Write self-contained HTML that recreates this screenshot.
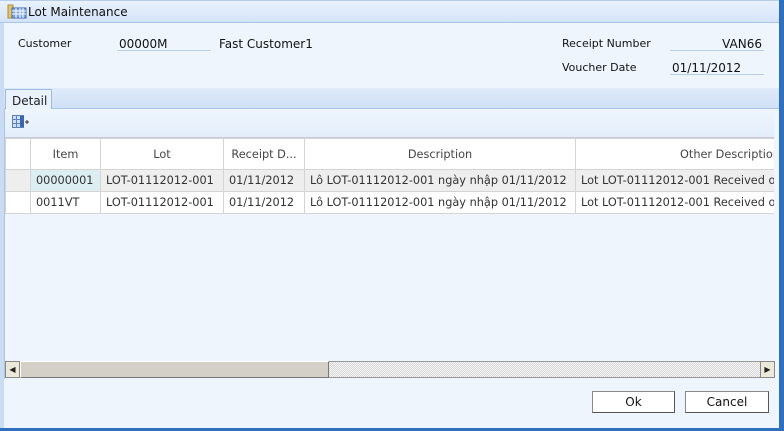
<!DOCTYPE html>
<html><head><meta charset="utf-8"><style>
*{margin:0;padding:0;box-sizing:border-box}
body{width:784px;height:431px;overflow:hidden;background:#eef5fd;font-family:Tahoma,"DejaVu Sans","Liberation Sans",sans-serif;font-size:11px;color:#222;position:relative}
.abs{position:absolute}
.title{left:0;top:0;width:779px;height:23px;background:linear-gradient(#e9f2fd,#d3e4f8);border-bottom:1px solid #a9c6ea;border-top:1px solid #b5cde9}
.title span{position:absolute;left:28px;top:4px;font-size:12px;color:#111}
.lbl{font-size:11px;color:#111}
.line{height:1px;background:#b9cde4}
.tabstrip{left:4px;top:88px;width:775px;height:21px;background:linear-gradient(#dfeafa,#d0e1f6);border-bottom:1px solid #a9c6ea}
.tab{left:5px;top:89px;width:47px;height:20px;background:#eaf3fd;border:1px solid #9cbbe0;border-bottom:none;padding:4px 0 0 6px;font-size:12px}
.tool{left:5px;top:110px;width:769px;height:28px;background:linear-gradient(#eef5fd,#e3eefb);border-bottom:1px solid #c8c8d8}
table{border-collapse:collapse;position:absolute;left:0;top:0;table-layout:fixed;width:820px}
td{border:1px solid #d4d4d4;height:22px;white-space:nowrap;overflow:hidden;padding:0 5px;font-size:11.3px;color:#333}
tr.h td{height:31px;text-align:center;background:#fff;color:#444}
tr.r1 td{background:#eeeeee}
tr.r2 td{background:#fff}
.clip{left:5px;top:138px;width:769px;height:223px;overflow:hidden}
.btn{height:22px;background:#fff;border:1px solid #888;border-right-color:#555;border-bottom-color:#555;text-align:center;font-size:12px;padding-top:3px;color:#111}
</style></head><body>
<div class="abs" style="left:0;top:0;width:4px;height:431px;background:#c9dcf3"></div>
<div class="abs" style="left:779px;top:0;width:5px;height:431px;background:#2f6fc0"></div>
<div class="abs" style="left:0;top:428px;width:784px;height:3px;background:#2f6fc0"></div>
<div class="abs title"><span>Lot Maintenance</span></div>
<svg class="abs" style="left:7px;top:4px" width="20" height="16"><rect x="1" y="1" width="5" height="13" fill="#e5c46a" stroke="#b08a2c"/><rect x="5" y="4" width="14" height="10" fill="#7fa8e0" stroke="#3d64a8"/><path d="M5 7H19M5 10H19M9 4V14M13 4V14M16 4V14" stroke="#fff" stroke-width="1"/></svg>
<div class="abs lbl" style="left:18px;top:37px">Customer</div>
<div class="abs lbl" style="left:119px;top:37px;font-size:12px">00000M</div>
<div class="abs line" style="left:117px;top:50px;width:94px"></div>
<div class="abs lbl" style="left:219px;top:37px;font-size:12px">Fast Customer1</div>
<div class="abs lbl" style="left:562px;top:37px">Receipt Number</div>
<div class="abs lbl" style="left:670px;top:37px;width:92px;text-align:right;font-size:12px">VAN66</div>
<div class="abs line" style="left:670px;top:50px;width:94px"></div>
<div class="abs lbl" style="left:562px;top:61px">Voucher Date</div>
<div class="abs lbl" style="left:672px;top:61px;font-size:12px">01/11/2012</div>
<div class="abs line" style="left:670px;top:74px;width:94px"></div>
<div class="abs tabstrip"></div>
<div class="abs tab">Detail</div>
<div class="abs" style="left:4px;top:109px;width:1px;height:270px;background:#a9c6ea"></div>
<div class="abs tool"></div>
<svg class="abs" style="left:12px;top:115px" width="18" height="14"><rect x="0.5" y="0.5" width="11" height="12" fill="#cfe0f7" stroke="#5a80c0"/><path d="M0 4.5H12M0 8.5H12M4.5 0V13M8.5 0V13" stroke="#5a80c0"/><rect x="8" y="1" width="4" height="11" fill="#3d64b0"/><path d="M13 7H17M15 5V9" stroke="#333"/></svg>
<div class="abs clip">
<table>
<colgroup><col style="width:25px"><col style="width:70px"><col style="width:123px"><col style="width:81px"><col style="width:271px"><col style="width:250px"></colgroup>
<tr class="h"><td></td><td>Item</td><td>Lot</td><td>Receipt D...</td><td>Description</td><td style="text-align:left;padding-left:104px">Other Description</td></tr>
<tr class="r1"><td></td><td style="background:#ddeef3">00000001</td><td>LOT-01112012-001</td><td>01/11/2012</td><td>Lô LOT-01112012-001 ngày nhập 01/11/2012</td><td>Lot LOT-01112012-001 Received on</td></tr>
<tr class="r2"><td></td><td>0011VT</td><td>LOT-01112012-001</td><td>01/11/2012</td><td>Lô LOT-01112012-001 ngày nhập 01/11/2012</td><td>Lot LOT-01112012-001 Received on</td></tr>
</table>
</div>
<div class="abs" style="left:5px;top:361px;width:770px;height:17px;background:repeating-conic-gradient(#d8d8d8 0 25%,#f4f4f4 0 50%) 0 0/2px 2px;border:1px solid #999"></div>
<div class="abs" style="left:5px;top:361px;width:15px;height:17px;background:#ece9d8;border:1px solid #888;font-size:8px;text-align:center;line-height:15px">◀</div>
<div class="abs" style="left:20px;top:361px;width:309px;height:17px;background:#d4d0c8;border:1px solid #777;border-top-color:#fff;border-left-color:#fff"></div>
<div class="abs" style="left:760px;top:361px;width:15px;height:17px;background:#ece9d8;border:1px solid #888;font-size:8px;text-align:center;line-height:15px">▶</div>
<div class="abs btn" style="left:592px;top:391px;width:83px">Ok</div>
<div class="abs btn" style="left:685px;top:391px;width:84px">Cancel</div>
</body></html>
